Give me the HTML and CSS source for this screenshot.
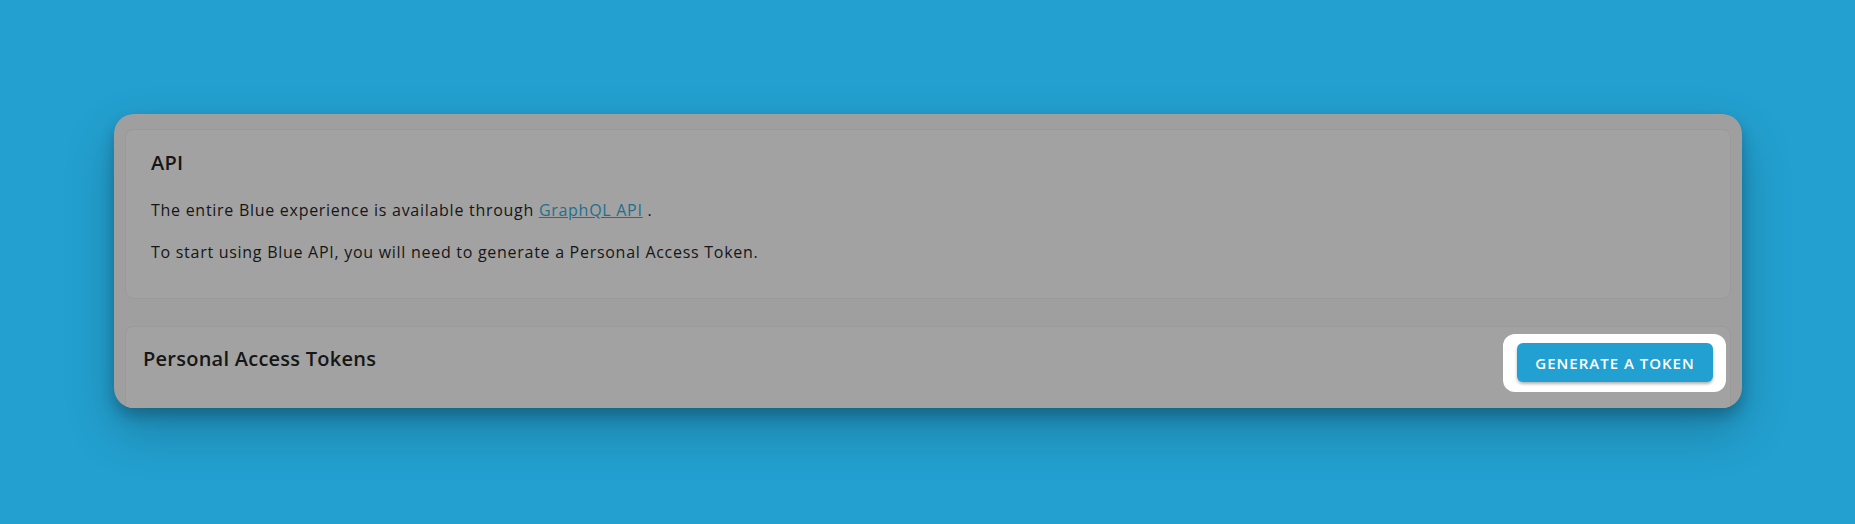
FILE: index.html
```html
<!DOCTYPE html>
<html lang="en-US">
  <head>
    <meta charset="utf-8" />
    <meta name="viewport" content="width=device-width" />
    <title>API settings</title>
    <link rel="stylesheet" href="styles.css">
  </head>

  <body>
    <main class="page">
      <section class="settings">
        <div class="panel api-panel">
          <h2 class="panel-title">API</h2>
          <p>
            The entire Blue experience is available through
            <a href="#">GraphQL API</a> .
          </p>
          <p>
            To start using Blue API, you will need to generate a Personal
            Access Token.
          </p>
        </div>

        <div class="panel tokens-panel">
          <h2 class="tokens-title">Personal Access Tokens</h2>
          <!-- onboarding spotlight around the button -->
          <div class="spotlight">
            <button class="btn-primary" type="button">Generate a token</button>
          </div>
        </div>
      </section>
    </main>
  </body>
</html>
```

FILE: styles.css
```css
html,
body {
  height: 100%;
}

body {
  margin: 0;
  background-color: #23a0d0;
  font-family: "Open Sans", "Noto Sans", sans-serif;
  color: #161616;
}

.page {
  min-height: 100%;
  box-sizing: border-box;
  padding: 114px 113px 0 114px;
}

.settings {
  height: 294px;
  box-sizing: border-box;
  overflow: hidden;
  background-color: #9f9f9f;
  border-radius: 20px;
  box-shadow: 0 8px 14px rgba(0, 0, 0, 0.22), 0 22px 50px rgba(0, 0, 0, 0.22);
}

.panel {
  margin: 0 11px;
  background-color: #a2a2a2;
  border: 1px solid #9a9a9a;
  border-radius: 8px;
}

/* top panel */
.api-panel {
  margin-top: 15px;
  height: 170px;
  box-sizing: border-box;
  padding: 19px 25px 0;
}

.panel-title {
  margin: 0 0 21px;
  font-size: 20px;
  font-weight: 600;
  line-height: 28px;
  letter-spacing: 0.2px;
}

.api-panel p {
  margin: 0 0 18px;
  font-size: 16px;
  line-height: 24px;
  letter-spacing: 0.72px;
}

.api-panel a {
  color: #1f6f8e;
  text-decoration: underline;
}

/* token panel */
.tokens-panel {
  margin-top: 27px;
  display: flex;
  align-items: center;
  justify-content: space-between;
  padding: 7px 4px 30px 17px;
}

.tokens-title {
  margin: 0 0 8px;
  font-size: 20px;
  font-weight: 600;
  line-height: 28px;
  letter-spacing: 0.25px;
}

.spotlight {
  padding: 9px 13px 10px 14px;
  background-color: #ffffff;
  border-radius: 12px;
}

.btn-primary {
  display: block;
  width: 196px;
  height: 39px;
  padding: 0;
  border: none;
  border-radius: 6px;
  background-color: #23a0d2;
  color: #ffffff;
  font-family: inherit;
  font-size: 15px;
  font-weight: 600;
  letter-spacing: 1px;
  text-transform: uppercase;
  box-shadow: 0 2px 3px rgba(0, 0, 0, 0.3);
  cursor: pointer;
}
```
